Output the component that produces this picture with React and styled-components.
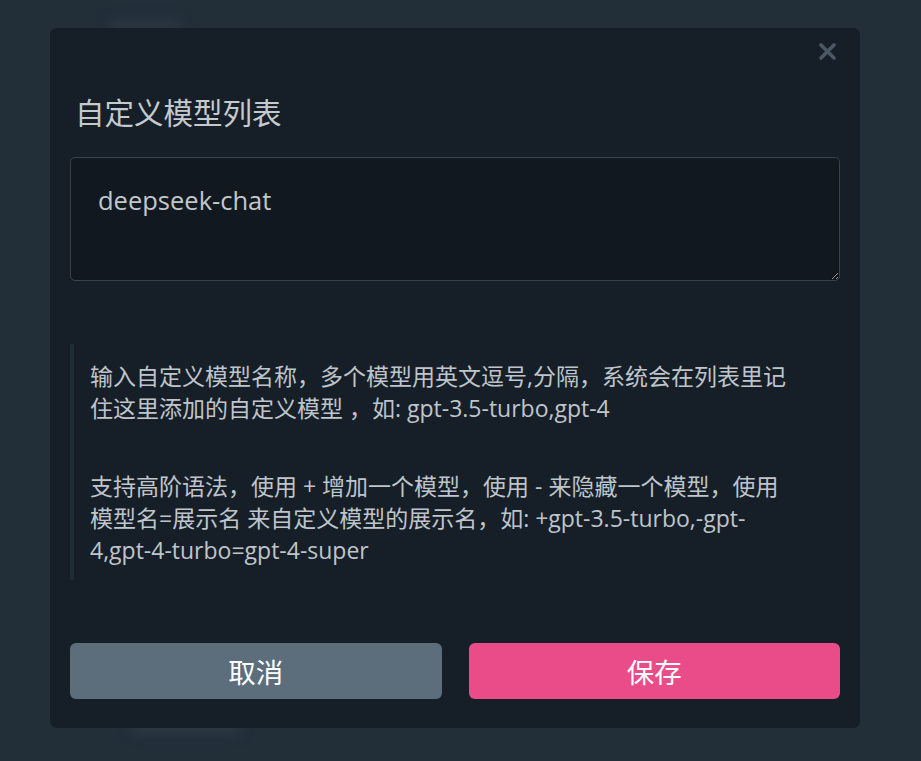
import React, { useState } from "react";
import styled, { createGlobalStyle } from "styled-components";

const GlobalStyle = createGlobalStyle`
  html, body {
    margin: 0;
    padding: 0;
    background: #222e38;
    font-family: "Open Sans", "Noto Sans CJK SC", sans-serif;
  }
`;

const Page = styled.div`
  height: 761px;
  overflow: hidden;
  filter: blur(6px);
  padding: 20px 110px;
  box-sizing: border-box;
  display: flex;
  flex-direction: column;
  gap: 690px;
`;

const Ghost = styled.div`
  height: ${p => p.h || 12}px;
  width: ${p => p.w}px;
  margin-left: ${p => p.offset || 0}px;
  background: #2c3a46;
  border-radius: 4px;
`;

const Backdrop = styled.div`
  position: fixed;
  inset: 0;
  padding: 28px 0 0 50px;
`;

const Modal = styled.div`
  position: relative;
  width: 810px;
  height: 700px;
  box-sizing: border-box;
  background: #161f28;
  border-radius: 7px;
  padding: 63px 20px 0;
  display: flex;
  flex-direction: column;
`;

const Close = styled.button`
  position: absolute;
  top: 12px;
  right: 22px;
  width: 22px;
  height: 22px;
  padding: 0;
  border: 0;
  background: none;
  cursor: pointer;
  display: flex;
  align-items: center;
  justify-content: center;
`;

const Title = styled.h2`
  margin: 0 0 26px 5px;
  font-family: "Noto Sans CJK SC", sans-serif;
  font-size: 29.5px;
  font-weight: 400;
  line-height: 40px;
  color: #c5cace;
`;

const TextArea = styled.textarea`
  display: block;
  width: 100%;
  height: 124px;
  box-sizing: border-box;
  margin: 0;
  padding: 26px 27px;
  background: #11181f;
  border: 1px solid #36424d;
  border-radius: 5px;
  color: #c2c7cc;
  font-family: "Open Sans", "Noto Sans CJK SC", sans-serif;
  font-size: 25.5px;
  line-height: 32px;
  resize: vertical;
  outline: none;
`;

const Note = styled.blockquote`
  margin: 63px 0 0;
  padding: 16px 36px 14px 16px;
  border-left: 4px solid #1f2b35;
  color: #bfc5cb;
  font-family: "Open Sans", "Noto Sans CJK SC", sans-serif;
  font-size: 23px;
  line-height: 32px;
`;

const Para = styled.p`
  margin: 0;
  & + & {
    margin-top: 46px;
  }
`;

const Actions = styled.div`
  margin-top: auto;
  margin-bottom: 29px;
  display: grid;
  grid-template-columns: 1fr 1fr;
  gap: 27px;
`;

const Button = styled.button`
  height: 56px;
  border: 0;
  border-radius: 6px;
  background: ${p => (p.primary ? "#e94c89" : "#5c6e7c")};
  color: #ffffff;
  font-family: "Noto Sans CJK SC", sans-serif;
  font-size: 27.5px;
  cursor: pointer;
`;

export default function App() {
  const [models, setModels] = useState("deepseek-chat");

  return (
    <>
      <GlobalStyle />
      <Page>
        <Ghost w={70} h={10} />
        <Ghost w={110} h={14} offset={20} />
      </Page>
      <Backdrop>
        <Modal>
          <Close aria-label="关闭">
            <svg width="19" height="19" viewBox="0 0 19 19">
              <path d="M3 3 L16 16 M16 3 L3 16" stroke="#4b5864" strokeWidth="3.6" strokeLinecap="round" />
            </svg>
          </Close>
          <Title>自定义模型列表</Title>
          <TextArea value={models} onChange={e => setModels(e.target.value)} />
          <Note>
            <Para>输入自定义模型名称，多个模型用英文逗号,分隔，系统会在列表里记住这里添加的自定义模型 ，如: gpt-3.5-turbo,gpt-4</Para>
            <Para>支持高阶语法，使用 + 增加一个模型，使用 - 来隐藏一个模型，使用 模型名=展示名 来自定义模型的展示名，如: +gpt-3.5-turbo,-gpt-4,gpt-4-turbo=gpt-4-super</Para>
          </Note>
          <Actions>
            <Button>取消</Button>
            <Button primary>保存</Button>
          </Actions>
        </Modal>
      </Backdrop>
    </>
  );
}
